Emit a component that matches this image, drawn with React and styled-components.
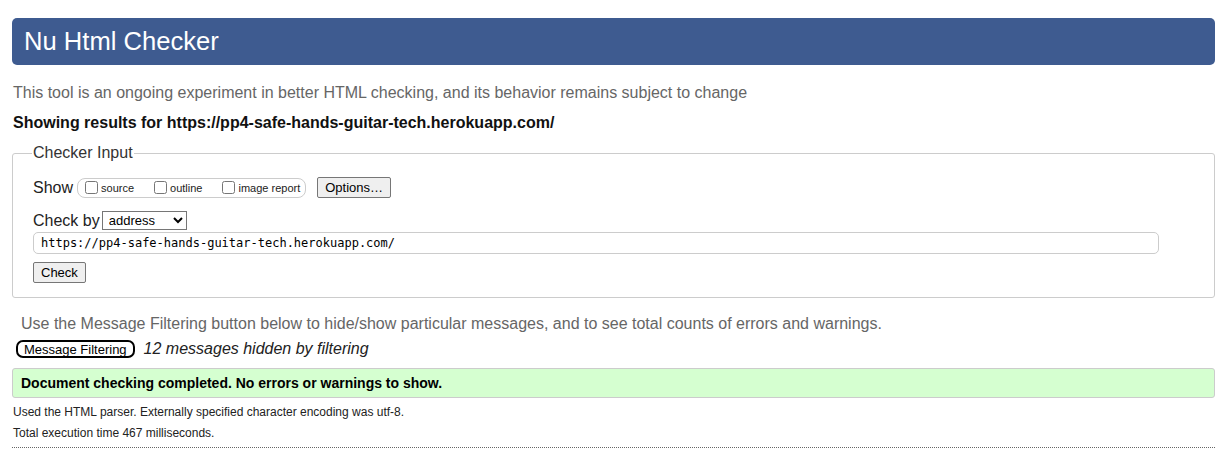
import styled, { createGlobalStyle } from 'styled-components';

const GlobalStyle = createGlobalStyle`
  html, body {
    margin: 0;
    padding: 0;
    background: #fff;
  }
  body {
    font-family: "Liberation Sans", Arial, sans-serif;
    color: #000;
  }
`;

const Page = styled.main`
  padding: 18px 12px 0 12px;
`;

const Header = styled.header`
  background: #3e5b90;
  border-radius: 5px;
  height: 47px;
  display: flex;
  align-items: center;
  padding: 0 12px;
`;

const Title = styled.h1`
  margin: 0;
  color: #fff;
  font-size: 25.6px;
  font-weight: normal;
`;

const Intro = styled.p`
  margin: 18px 0 0 1px;
  color: #666;
  font-size: 16px;
  line-height: 20px;
`;

const Results = styled.h2`
  margin: 10px 0 0 1px;
  font-size: 16px;
  line-height: 20px;
  font-weight: bold;
  color: #111;
`;

const Fieldset = styled.fieldset`
  margin: 11px 0 0 0;
  border: 1px solid #ccc;
  border-radius: 3px;
  padding: 15px 20px 14px 20px;
`;

const Legend = styled.legend`
  font-size: 16px;
  color: #333;
  padding: 0 1px;
  margin-left: -1px;
`;

const Row = styled.div`
  display: flex;
  align-items: center;
  gap: ${(p) => p.gap || 0}px;
  margin-top: ${(p) => p.top || 0}px;
`;

const Label = styled.span`
  font-size: 16px;
  color: #222;
  margin-right: ${(p) => p.space || 2}px;
`;

const OptionGroup = styled.span`
  display: inline-flex;
  align-items: center;
  border: 1px solid #ccc;
  border-radius: 8px;
  height: 18px;
  padding: 0 5px 0 7px;
  gap: 20px;
  margin-right: 11px;
`;

const CheckLabel = styled.label`
  display: inline-flex;
  align-items: center;
  font-size: 11px;
  color: #222;
  gap: 3px;
`;

const Box = styled.input`
  width: 13px;
  height: 13px;
  margin: 0;
`;

const Button = styled.button`
  font-family: "Liberation Sans", Arial, sans-serif;
  font-size: 13px;
  background: #efefef;
  border: 1px solid #767676;
  border-radius: 2px;
  padding: 1px 7px;
  height: 21px;
  color: #000;
`;

const Select = styled.select`
  font-family: "Liberation Sans", Arial, sans-serif;
  font-size: 13px;
  height: 19px;
  width: 85px;
  border: 1px solid #767676;
  border-radius: 0;
  background: #fff;
  padding: 0 2px;
  color: #000;
`;

const UrlInput = styled.input`
  display: block;
  box-sizing: border-box;
  width: 1126px;
  height: 22px;
  margin-top: 2px;
  border: 1px solid #ccc;
  border-radius: 5px;
  padding: 0 7px;
  font-family: "DejaVu Sans Mono", "Liberation Mono", monospace;
  font-size: 12px;
  color: #000;
`;

const Hint = styled.p`
  margin: 16px 0 0 9px;
  color: #666;
  font-size: 16px;
  line-height: 20px;
`;

const FilterButton = styled.button`
  font-family: "Liberation Sans", Arial, sans-serif;
  font-size: 13px;
  background: #fff;
  border: 2px solid #000;
  border-radius: 7px;
  height: 18px;
  padding: 0 6px;
  color: #000;
  display: inline-flex;
  align-items: center;
  margin-left: 4px;
`;

const HiddenNote = styled.span`
  font-style: italic;
  font-size: 16px;
  color: #222;
  margin-left: 9px;
`;

const Success = styled.div`
  margin-top: 10px;
  background: #d5ffd0;
  border: 1px solid #ccc;
  border-radius: 3px;
  height: 28px;
  display: flex;
  align-items: center;
  padding: 0 8px;
  font-size: 14px;
  font-weight: bold;
  color: #000;
`;

const Detail = styled.p`
  margin: ${(p) => p.top}px 0 0 1px;
  font-size: 12px;
  line-height: 15px;
  color: #222;
`;

const Rule = styled.hr`
  margin: 6px 0 0 0;
  border: 0;
  border-top: 1px dotted #666;
`;

export default function App() {
  return (
    <>
      <GlobalStyle />
      <Page>
        <Header>
          <Title>Nu Html Checker</Title>
        </Header>
        <Intro>
          This tool is an ongoing experiment in better HTML checking, and its
          behavior remains subject to change
        </Intro>
        <Results>
          Showing results for https://pp4-safe-hands-guitar-tech.herokuapp.com/
        </Results>
        <Fieldset>
          <Legend>Checker Input</Legend>
          <Row>
            <Label space={4}>Show</Label>
            <OptionGroup>
              <CheckLabel>
                <Box type="checkbox" />
                source
              </CheckLabel>
              <CheckLabel>
                <Box type="checkbox" />
                outline
              </CheckLabel>
              <CheckLabel>
                <Box type="checkbox" />
                image report
              </CheckLabel>
            </OptionGroup>
            <Button>Options…</Button>
          </Row>
          <Row top={13}>
            <Label>Check by</Label>
            <Select defaultValue="address">
              <option value="address">address</option>
              <option value="file">file upload</option>
              <option value="text">text input</option>
            </Select>
          </Row>
          <UrlInput
            type="url"
            defaultValue="https://pp4-safe-hands-guitar-tech.herokuapp.com/"
          />
          <Row top={8}>
            <Button>Check</Button>
          </Row>
        </Fieldset>
        <Hint>
          Use the Message Filtering button below to hide/show particular
          messages, and to see total counts of errors and warnings.
        </Hint>
        <Row top={6}>
          <FilterButton>Message Filtering</FilterButton>
          <HiddenNote>12 messages hidden by filtering</HiddenNote>
        </Row>
        <Success>Document checking completed. No errors or warnings to show.</Success>
        <Detail top={7}>
          Used the HTML parser. Externally specified character encoding was
          utf-8.
        </Detail>
        <Detail top={6}>Total execution time 467 milliseconds.</Detail>
        <Rule />
      </Page>
    </>
  );
}
